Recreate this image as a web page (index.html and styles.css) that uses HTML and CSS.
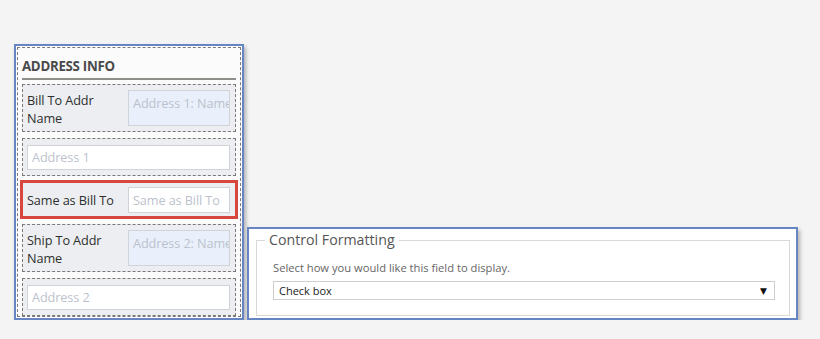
FILE: index.html
```html
<!DOCTYPE html>
<html>
<head>
<meta charset="utf-8">
<link rel="stylesheet" href="styles.css">
</head>
<body>
<div class="stage">
  <div class="panel">
    <div class="panel-inner">
      <div class="heading">ADDRESS INFO</div>
      <div class="row row-tall">
        <div class="label">Bill To Addr<br>Name</div>
        <div class="input input-blue input-tall">Address 1: Name</div>
      </div>
      <div class="row row-full">
        <div class="input input-wide">Address 1</div>
      </div>
      <div class="row row-selected">
        <div class="label">Same as Bill To</div>
        <div class="input input-short">Same as Bill To</div>
      </div>
      <div class="row row-tall row-ship">
        <div class="label">Ship To Addr<br>Name</div>
        <div class="input input-blue input-tall">Address 2: Name</div>
      </div>
      <div class="row row-full row-last">
        <div class="input input-wide">Address 2</div>
      </div>
    </div>
  </div>
  <div class="format-panel">
    <fieldset class="format-set">
      <legend class="format-legend">Control Formatting</legend>
      <div class="hint">Select how you would like this field to display.</div>
      <div class="select">
        <span class="select-value">Check box</span>
        <span class="select-arrow">▼</span>
      </div>
    </fieldset>
  </div>
</div>
</body>
</html>
```
FILE: styles.css
```css
html, body {
  margin: 0;
  padding: 0;
  background: #f4f4f4;
  font-family: "Open Sans", "Noto Sans", sans-serif;
  color: #333;
}
.stage {
  display: flex;
  align-items: flex-end;
  padding: 44px 0 0 14px;
  gap: 3px;
}
.panel {
  width: 224px;
  border: 2px solid #6685c2;
  padding: 1px;
  background: #fff;
  box-shadow: 2px 3px 4px rgba(0,0,0,0.28);
}
.panel-inner {
  border: 1px dashed #7a7a7a;
  padding: 0 4px 0 4px;
  background: #fbfbfb;
}
.heading {
  font-weight: bold;
  font-size: 13.3px;
  line-height: 16px;
  color: #4a4a4a;
  padding: 10px 0 4px 0;
  border-bottom: 2px solid #8f8f8a;
  margin-bottom: 4px;
  letter-spacing: -0.3px;
}
.row {
  border: 1px dashed #7a7a7a;
  background: #eceef1;
  display: flex;
  align-items: flex-start;
  box-sizing: border-box;
}
.row-tall {
  height: 48px;
  padding: 5px 5px 0 4px;
  justify-content: space-between;
  margin-bottom: 6px;
}
.row-full {
  height: 38px;
  padding: 6px 5px 0 4px;
  margin-bottom: 4px;
}
.row-last {
  margin-bottom: 0;
}
.row-selected {
  margin: 0 -2px 5px -2px;
  border: 3px solid #d8473f;
  height: 39px;
  padding: 4px 5px 0 4px;
  justify-content: space-between;
  align-items: flex-start;
}
.row-selected .label {
  padding-top: 4px;
}
.label {
  font-size: 12.7px;
  line-height: 18px;
  color: #2e2e2e;
  padding-top: 1px;
  letter-spacing: -0.1px;
}
.input {
  box-sizing: border-box;
  border: 1px solid #d0d3d8;
  background: #fff;
  color: #bcc2cc;
  font-size: 12.7px;
  line-height: 20px;
  padding: 2px 4px;
  white-space: nowrap;
  overflow: hidden;
  letter-spacing: -0.1px;
}
.input-blue {
  background: #e9f0fb;
}
.input-tall {
  width: 102px;
  height: 36px;
}
.input-wide {
  width: 203px;
  height: 25px;
  line-height: 19px;
}
.input-short {
  width: 102px;
  height: 26px;
  line-height: 20px;
}
.format-panel {
  width: 534px;
  border: 2px solid #6685c2;
  background: #fff;
  padding: 2px 6px 2px 7px;
  box-shadow: 2px 3px 4px rgba(0,0,0,0.28);
}
.format-set {
  margin: 0;
  border: 1px solid #d9d9d9;
  padding: 0 14px 15px 16px;
}
.format-legend {
  font-size: 14.2px;
  line-height: 18px;
  color: #555;
  padding: 0 4px;
  margin-left: -8px;
}
.hint {
  font-size: 11.2px;
  line-height: 14px;
  color: #666;
  margin-top: 12px;
}
.select {
  margin-top: 6px;
  box-sizing: border-box;
  height: 19px;
  border: 1px solid #cfcfcf;
  display: flex;
  align-items: center;
  justify-content: space-between;
  padding: 0 7px 0 5px;
}
.select-value {
  font-size: 11px;
  color: #222;
}
.select-arrow {
  font-size: 9px;
  color: #111;
  font-family: "DejaVu Sans", sans-serif;
}
```
